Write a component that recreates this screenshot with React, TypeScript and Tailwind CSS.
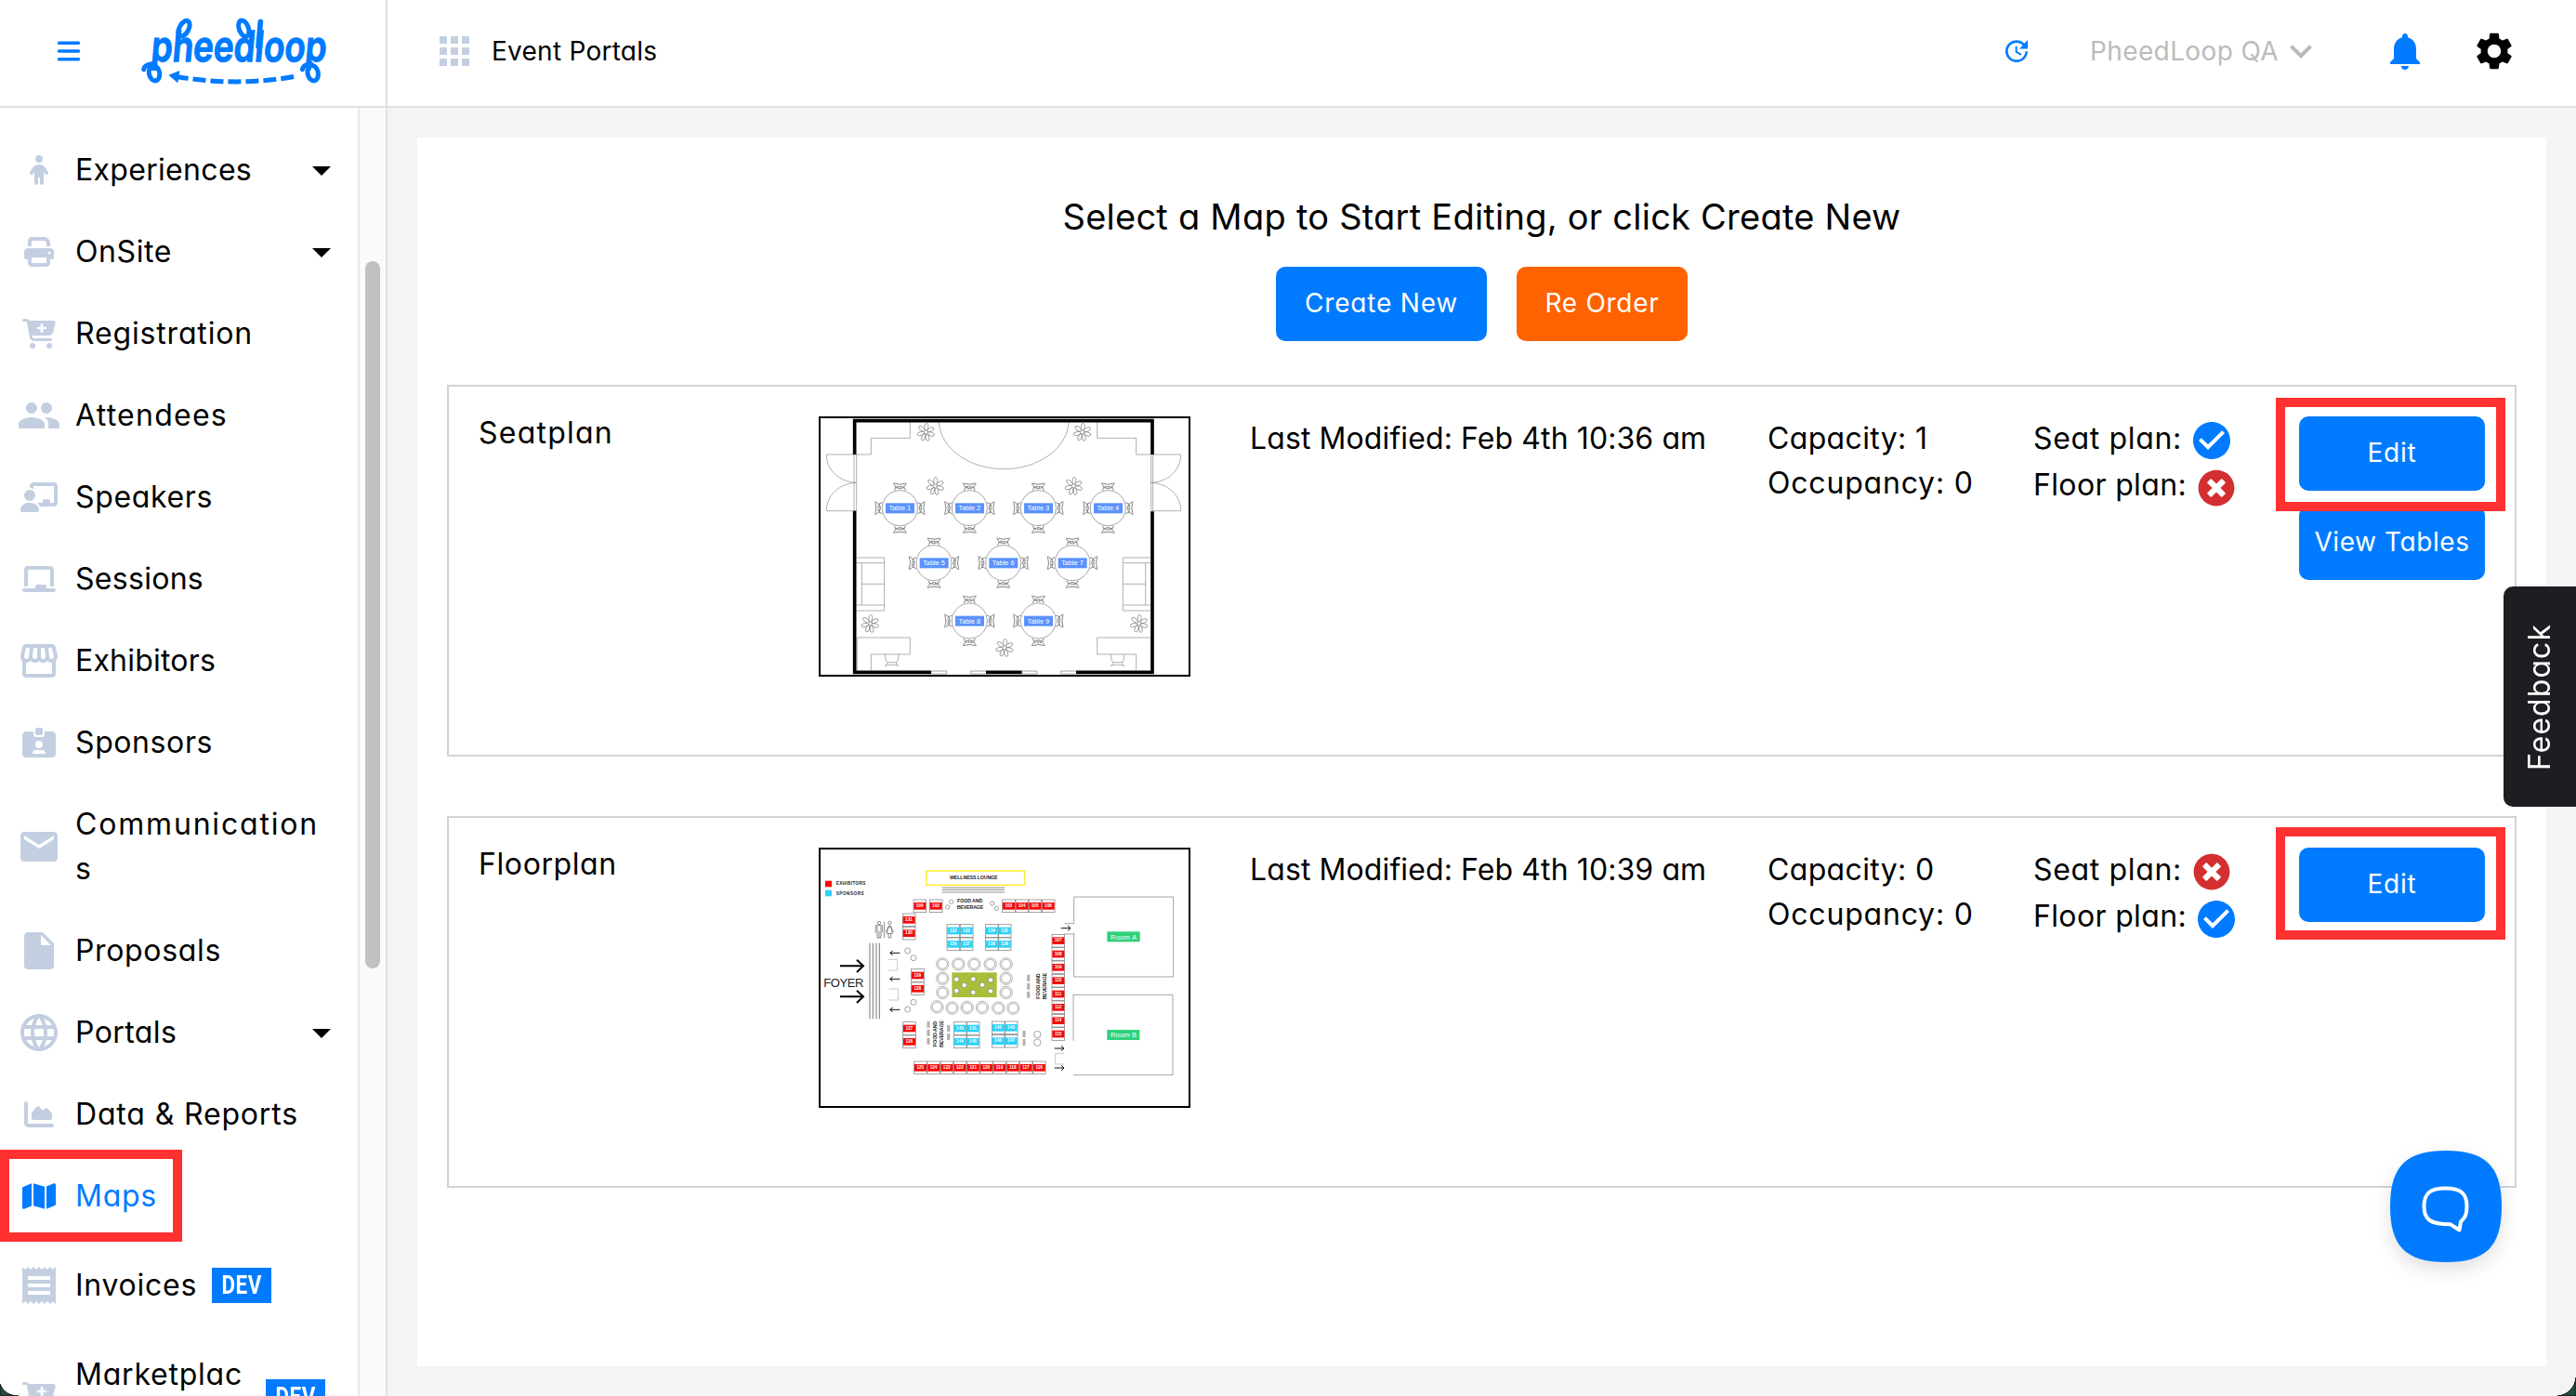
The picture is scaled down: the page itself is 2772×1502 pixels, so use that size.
import type { ReactNode } from "react";
import type { IconType } from "react-icons";
import {
    FaBars,
    FaCartPlus,
    FaChalkboard,
    FaChalkboardUser,
    FaChartArea,
    FaChild,
    FaIdCardClip,
    FaMap,
    FaPrint,
} from "react-icons/fa6";
import { FaTimesCircle } from "react-icons/fa";
import {
    MdApps,
    MdArrowDropDown,
    MdCheckCircle,
    MdEmail,
    MdInsertDriveFile,
    MdKeyboardArrowDown,
    MdLanguage,
    MdNotifications,
    MdOutlineStorefront,
    MdPeople,
    MdReceipt,
    MdSettings,
    MdUpdate,
} from "react-icons/md";

type NavItem = {
    label: string;
    icon: IconType;
    iconClass: string;
    labelClass: string;
    caret?: boolean;
    dev?: boolean;
    active?: boolean;
};

const navItems: NavItem[] = [
    { label: "Experiences", icon: FaChild, iconClass: "w-8 h-8", labelClass: "tracking-[0.31px]", caret: true },
    { label: "OnSite", icon: FaPrint, iconClass: "w-8 h-8", labelClass: "tracking-[0.6px]", caret: true },
    { label: "Registration", icon: FaCartPlus, iconClass: "w-9 h-8", labelClass: "tracking-[0.84px]" },
    { label: "Attendees", icon: MdPeople, iconClass: "w-12 h-12", labelClass: "tracking-[1.26px]" },
    { label: "Speakers", icon: FaChalkboardUser, iconClass: "w-10 h-8", labelClass: "tracking-[0.65px]" },
    { label: "Sessions", icon: FaChalkboard, iconClass: "w-9 h-8", labelClass: "tracking-[0.29px]" },
    { label: "Exhibitors", icon: MdOutlineStorefront, iconClass: "w-12 h-12", labelClass: "tracking-[0.2px]" },
    { label: "Sponsors", icon: FaIdCardClip, iconClass: "w-9 h-8", labelClass: "tracking-[0.6px]" },
    {
        label: "Communications",
        icon: MdEmail,
        iconClass: "w-12 h-12",
        labelClass: "w-[272px] break-all tracking-[1.82px]",
    },
    { label: "Proposals", icon: MdInsertDriveFile, iconClass: "w-12 h-12", labelClass: "tracking-[0.66px]" },
    { label: "Portals", icon: MdLanguage, iconClass: "w-12 h-12", labelClass: "tracking-[0.4px]", caret: true },
    { label: "Data & Reports", icon: FaChartArea, iconClass: "w-8 h-8", labelClass: "tracking-[0.84px]" },
    { label: "Maps", icon: FaMap, iconClass: "w-9 h-8", labelClass: "tracking-[0.75px]", active: true },
    { label: "Invoices", icon: MdReceipt, iconClass: "w-12 h-12", labelClass: "tracking-[0.73px]", dev: true },
    {
        label: "Marketplace",
        icon: FaCartPlus,
        iconClass: "w-9 h-8",
        labelClass: "w-[190px] break-all tracking-[0.78px]",
        dev: true,
    },
];

const Logo = () => (
    <svg
        viewBox="0 0 690 270"
        className="h-[90px] w-[230px] overflow-visible"
        fill="none"
        stroke="#007bff"
        strokeWidth="15"
    >
        <text
            x="66"
            y="168"
            transform="translate(14 0) skewX(-5)"
            textLength="566"
            lengthAdjust="spacingAndGlyphs"
            fill="#007bff"
            strokeWidth="4"
            fontSize="136"
            fontWeight="600"
            fontFamily="Inter, sans-serif"
        >
            pheedloop
        </text>
        {/* Loops on the ascenders and descenders */}
        <ellipse cx="174" cy="62" rx="15" ry="27" transform="rotate(28 174 62)" />
        <ellipse cx="367" cy="62" rx="15" ry="27" transform="rotate(-20 367 62)" />
        <path d="M421 40L414 120" strokeLinecap="round" strokeWidth="17" />
        <ellipse cx="78" cy="206" rx="17" ry="25" transform="rotate(-12 78 206)" />
        <ellipse cx="590" cy="206" rx="17" ry="25" transform="rotate(-12 590 206)" />
        <path d="M44 194Q46 178 72 176M556 194Q558 178 584 176" strokeLinecap="round" />
        {/* Return arrow */}
        <path d="M124 212L160 198L154 238Z" fill="#007bff" stroke="none" />
        <path d="M154 218Q345 250 532 217" strokeDasharray="42 15" strokeDashoffset="8" />
    </svg>
);

const DevBadge = () => (
    <span className="flex h-[38px] w-16 shrink-0 items-center justify-center bg-[#007bff] text-white">
        <span className="scale-x-[0.8] font-['Roboto',sans-serif] text-[28px] font-bold leading-none tracking-wide">
            DEV
        </span>
    </span>
);

const Sidebar = () => (
    <aside className="flex w-[417px] shrink-0 overflow-hidden border-r-2 border-[#e0e0e0] bg-white">
        <nav className="w-[385px] shrink-0 pt-[23px]">
            {navItems.map((item) => {
                const Icon = item.icon;
                return (
                    <div
                        key={item.label}
                        className={`relative flex min-h-[88px] items-center pl-5 pr-[29px] ${
                            item.label === "Invoices" ? "h-[104px]" : "py-5"
                        } ${item.active ? "text-[#007bff]" : "text-black"}`}
                    >
                        <span
                            className={`flex w-11 shrink-0 items-center justify-center ${
                                item.active ? "text-[#007bff]" : "text-[#c3cfe1]"
                            }`}
                        >
                            <Icon className={`shrink-0 ${item.iconClass}`} />
                        </span>
                        <span className={`ml-[17px] text-[32px] leading-[48px] ${item.labelClass}`}>{item.label}</span>
                        {item.dev && (
                            <span className={item.label === "Invoices" ? "ml-4" : "ml-[15px]"}>
                                <DevBadge />
                            </span>
                        )}
                        {item.caret && <MdArrowDropDown className="ml-auto -mr-3.5 h-12 w-12" />}
                        {item.active && (
                            <span className="absolute -top-[6px] left-0 h-[99px] w-[196px] border-10 border-[#ff3131]" />
                        )}
                    </div>
                );
            })}
        </nav>
        {/* Scrollbar */}
        <div className="flex-1 border-l-2 border-[#e8e8e8] bg-[#fafafa] pl-1.5 pt-[165px]">
            <div className="h-[761px] w-4 rounded-full bg-[#c1c1c1]" />
        </div>
    </aside>
);

const Header = () => (
    <header className="flex h-[116px] shrink-0 border-b-2 border-[#e0e0e0] bg-white">
        <div className="flex w-[417px] shrink-0 items-center border-r-2 border-[#e0e0e0] pb-1 pl-[60px]">
            <FaBars className="h-7 w-7 text-[#007bff]" />
            <div className="ml-[52px]">
                <Logo />
            </div>
        </div>
        <div className="flex flex-1 items-center pb-1 pl-12 pr-16">
            <MdApps className="h-12 w-12 text-[#c3cfe1]" />
            <span className="ml-4 text-[28px] tracking-[0.25px]">Event Portals</span>
            <MdUpdate className="ml-auto h-8 w-8 text-[#007bff]" />
            <span className="ml-[63px] text-[28px] tracking-[0.38px] text-[#bbbbbb]">PheedLoop QA</span>
            <MdKeyboardArrowDown className="h-12 w-12 text-[#bbbbbb]" />
            <MdNotifications className="ml-16 h-12 w-12 text-[#007bff]" />
            <MdSettings className="ml-12 h-12 w-12" />
        </div>
    </header>
);

/* ---------- Seat plan drawing ---------- */

const seatTables = [
    { x: 295, y: 322 },
    { x: 520, y: 322 },
    { x: 742, y: 322 },
    { x: 967, y: 322 },
    { x: 405, y: 499 },
    { x: 629, y: 499 },
    { x: 852, y: 499 },
    { x: 520, y: 686 },
    { x: 742, y: 686 },
];

const plants = [
    { x: 379, y: 77 },
    { x: 884, y: 77 },
    { x: 409, y: 251 },
    { x: 856, y: 251 },
    { x: 199, y: 695 },
    { x: 1067, y: 695 },
    { x: 633, y: 773 },
];

const chair = "M-22-80Q0-73 22-80M-20-77L-13-68L-18-57M20-77L13-68L18-57M-14-67Q0-58 14-67M-11-70h6v5M-2-70h5v5M11-70h-4";

const SeatPlanDrawing = () => (
    <svg viewBox="39 32 1188 828" className="h-full w-full" fill="none" stroke="#777" strokeWidth="2">
        <g stroke="#888">
            <path d="M328 44V96H202V149H155M932 44V96H1058V149H1104" />
            <path d="M421 44C425 130 520 196 631 196S836 130 840 44" />
            <path d="M155 149H58C58 200 100 238 155 240C100 242 58 280 58 331H155" />
            <path d="M1106 149H1202C1202 200 1160 238 1106 240C1160 242 1202 280 1202 331H1106" />
            <path d="M147 149V331M155 149V331M1106 149V331M1112 149V331" />
            <path d="M155 482H245V653H155M155 499H245M155 635H245M172 499V635M172 567H245" />
            <path d="M1104 482H1015V653H1104M1104 499H1015M1104 635H1015M1088 499V635M1088 567H1015" />
            <path d="M157 740H328V794H202V846M157 740V846M1104 740H932V794H1058V846" />
            <path d="M247 794Q248 818 256 820H282Q290 818 291 794M246 832Q269 822 292 832M256 820L250 830M282 820L288 830" />
            <path d="M976 794Q977 818 985 820H1011Q1019 818 1020 794M975 832Q998 822 1021 832M985 820L979 830M1011 820L1017 830" />
        </g>
        <path d="M149 149V40H1110V149" stroke="#000" strokeWidth="11" />
        <path d="M149 331V852H396M573 852H689M864 852H1110V333" stroke="#000" strokeWidth="11" />
        <path d="M396 848H446V857H396M573 848H524V857H573M689 848H738V857H689M864 848H815V857H864" />
        {plants.map((p) => (
            <g key={`${p.x}-${p.y}`} transform={`translate(${p.x} ${p.y})`} stroke="#777">
                {[5, 62, 110, 165, 205, 255, 310].map((a) => (
                    <ellipse key={a} cx="0" cy="-17" rx="6" ry="12" transform={`rotate(${a})`} />
                ))}
            </g>
        ))}
        {seatTables.map((t, i) => (
            <g key={i} transform={`translate(${t.x} ${t.y})`}>
                <circle r="57" />
                {[0, 90, 180, 270].map((a) => (
                    <path key={a} d={chair} stroke="#444" transform={`rotate(${a})`} />
                ))}
                <rect x="-46" y="-16" width="93" height="33" fill="#5b92fb" stroke="none" />
                <text
                    y="8"
                    textAnchor="middle"
                    fontSize="22"
                    fill="#fff"
                    stroke="none"
                    fontFamily="Liberation Sans, sans-serif"
                >
                    Table {i + 1}
                </text>
            </g>
        ))}
    </svg>
);

/* ---------- Floor plan drawing ---------- */

const RED = "#f50a0a";
const CYAN = "#2ad2f8";

const booths: [number, number, string, string][] = [
    [338, 205, "100", RED],
    [390, 205, "102", RED],
    [625, 205, "103", RED],
    [668, 205, "104", RED],
    [710, 205, "105", RED],
    [753, 205, "106", RED],
    [303, 250, "131", RED],
    [303, 293, "130", RED],
    [331, 429, "129", RED],
    [331, 472, "128", RED],
    [304, 600, "127", RED],
    [304, 643, "126", RED],
    ...["107", "108", "109", "110", "111", "112", "114", "115"].map(
        (n, i): [number, number, string, string] => [785, 317 + i * 43, n, RED],
    ),
    ...["125", "124", "123", "122", "121", "120", "119", "118", "117", "116"].map(
        (n, i): [number, number, string, string] => [340 + i * 42.6, 727, n, RED],
    ),
    [446, 285, "132", CYAN],
    [489, 285, "133", CYAN],
    [446, 328, "136", CYAN],
    [489, 328, "137", CYAN],
    [570, 285, "134", CYAN],
    [612, 285, "135", CYAN],
    [570, 328, "138", CYAN],
    [612, 328, "139", CYAN],
    [468, 600, "140", CYAN],
    [510, 600, "141", CYAN],
    [468, 643, "144", CYAN],
    [510, 643, "145", CYAN],
    [591, 598, "142", CYAN],
    [633, 598, "143", CYAN],
    [591, 641, "146", CYAN],
    [633, 641, "147", CYAN],
];

const stools = [
    [433, 413], [484, 413], [535, 413], [587, 413], [638, 413],
    [433, 459], [638, 459], [433, 505], [638, 505],
    [415, 551], [464, 555], [512, 553], [561, 553], [613, 555], [661, 555],
];

const greenDots = [
    [478, 462], [532, 461], [588, 464], [503, 481], [561, 480], [478, 499], [532, 504], [588, 500],
];

const FloorPlanDrawing = () => (
    <svg
        viewBox="39 43 1188 828"
        className="h-full w-full"
        fill="none"
        stroke="#555"
        strokeWidth="2"
        fontFamily="Liberation Sans, sans-serif"
    >
        {/* Legend */}
        <g stroke="none">
            <rect x="54" y="144" width="21" height="20" fill={RED} />
            <rect x="54" y="174" width="21" height="20" fill={CYAN} />
            <g fill="#222" fontSize="14" fontWeight="700">
                <text x="89" y="158" textLength="95">EXHIBITORS</text>
                <text x="89" y="189" textLength="90">SPONSORS</text>
            </g>
        </g>
        <rect x="381" y="112" width="317" height="46" stroke="#f8ef3c" strokeWidth="5" />
        <g fill="#222" stroke="none" fontWeight="700" fontSize="16">
            <text x="456" y="139" textLength="155">WELLNESS LOUNGE</text>
            <text x="480" y="215" textLength="82">FOOD AND</text>
            <text x="479" y="235" textLength="86">BEVERAGE</text>
            <text transform="translate(748 525) rotate(-90)" textLength="82">FOOD AND</text>
            <text transform="translate(769 527) rotate(-90)" textLength="86">BEVERAGE</text>
            <text transform="translate(414 679) rotate(-90)" textLength="82">FOOD AND</text>
            <text transform="translate(435 681) rotate(-90)" textLength="86">BEVERAGE</text>
        </g>
        <path d="M431 166H633M431 173H633M431 181H633" />
        {/* Foyer */}
        <text x="49" y="486" fontSize="39" textLength="129" fill="#222" stroke="none">
            FOYER
        </text>
        <g stroke="#000" strokeWidth="6">
            <path d="M102 419H176M156 399L177 419L156 439M102 518H176M156 498L177 518L156 538" />
        </g>
        <path d="M198 345V590M208 345V590M219 345V590M229 345V590" stroke="#777" strokeWidth="3" />
        <g stroke="#111" strokeWidth="3">
            {[377, 461, 560].map((y) => (
                <path key={y} d={`M295 ${y}H264M272 ${y - 7}L263 ${y}L272 ${y + 7}`} />
            ))}
            <path d="M815 297H845M837 289L846 297L837 305" />
            <path d="M794 685H824M816 677L825 685L816 693M794 748H824M816 740L825 748L816 756" />
        </g>
        <path d="M258 398H287V433H258M260 493H289V529H260M826 701H797V736H826" stroke="#aaa" />
        {/* Restrooms */}
        <g stroke="#555">
            <circle cx="228" cy="280" r="5" />
            <circle cx="262" cy="280" r="5" />
            <path d="M217 312V288H239V312M222 290V328H234V290M228 306V328M245 276V328" />
            <path d="M262 288L250 310M262 288L275 310M257 292L253 314H271L267 292ZM258 314V328H266V314" />
        </g>
        {/* Rooms */}
        <path d="M826 282H857V196H1178V454H857V313M857 316H826M855 660V512H1176V771H855" stroke="#777" />
        <rect x="964" y="308" width="106" height="33" fill="#2fd07a" stroke="none" />
        <rect x="964" y="625" width="105" height="33" fill="#2fd07a" stroke="none" />
        <g fill="#fff" stroke="none" fontSize="23" textAnchor="middle">
            <text x="1017" y="333" textLength="84">Room A</text>
            <text x="1017" y="649" textLength="84">Room B</text>
        </g>
        {/* Booths */}
        {booths.map(([x, y, label, color]) => (
            <g key={label}>
                <rect x={x + 1} y={y} width="41" height="41" stroke="#777" />
                <rect x={x + 2} y={y + 9} width="39" height="23" fill={color} stroke="none" />
                <text
                    x={x + 21}
                    y={y + 24}
                    textAnchor="middle"
                    fontSize="14"
                    fontWeight="700"
                    fill="#fff"
                    stroke="none"
                >
                    {label}
                </text>
            </g>
        ))}
        {stools.map(([x, y]) => (
            <g key={`${x}-${y}`} stroke="#888">
                <circle cx={x} cy={y} r="20" />
                <circle cx={x} cy={y} r="15" />
            </g>
        ))}
        <rect x="463" y="440" width="145" height="80" fill="#a9bf3a" stroke="none" />
        {greenDots.map(([x, y]) => (
            <circle key={`${x}-${y}`} cx={x} cy={y} r="8" fill="#fff" stroke="#777" />
        ))}
        <g stroke="#777">
            {[[461, 212], [449, 229], [593, 217], [607, 233]].map(([x, y]) => (
                <circle key={x} cx={x} cy={y} r="6.5" />
            ))}
            {[[320, 370], [339, 393], [339, 536], [320, 559]].map(([x, y]) => (
                <circle key={y} cx={x} cy={y} r="9" />
            ))}
            <circle cx="739" cy="640" r="11" />
            <circle cx="739" cy="666" r="11" />
        </g>
        <g stroke="#b5adad" strokeWidth="9">
            <path d="M710 447V522" strokeDasharray="21 6" />
            <path d="M387 597V673" strokeDasharray="21 6" />
            <path d="M452 610V659" strokeDasharray="21 6" />
            <path d="M696 628V677" strokeDasharray="21 6" />
        </g>
    </svg>
);

/* ---------- Map cards ---------- */

type MapCardProps = {
    name: string;
    nameClass: string;
    drawing: ReactNode;
    modified: string;
    capacity: number;
    occupancy: number;
    seatPlan: boolean;
    floorPlan: boolean;
    viewTables?: boolean;
};

const Status = ({ on }: { on: boolean }) =>
    on ? (
        <span className="flex h-10 w-10 items-center justify-center">
            <MdCheckCircle className="h-12 w-12 shrink-0 text-[#007bff]" />
        </span>
    ) : (
        <FaTimesCircle className="h-10 w-10 text-[#d32f2f]" />
    );

const MapCard = (props: MapCardProps) => (
    <div className="flex h-[400px] items-start border-2 border-[#d3d3d3] p-8 text-[32px] leading-[48px]">
        <div className={`w-[366px] leading-[36px] ${props.nameClass}`}>{props.name}</div>
        <div className="h-[280px] w-[400px] border-2 border-black">{props.drawing}</div>
        <div className="ml-16 w-[557px] tracking-[0.1px]">Last Modified: {props.modified}</div>
        <div className="w-[286px]">
            <div className="tracking-[0.35px]">Capacity: {props.capacity}</div>
            <div className="tracking-[0.8px]">Occupancy: {props.occupancy}</div>
        </div>
        <div>
            <div className="flex h-[51px] items-center gap-3">
                <span className="pb-1 tracking-[0.67px]">Seat plan:</span>
                <Status on={props.seatPlan} />
            </div>
            <div className="flex h-[51px] items-center gap-3">
                <span className="pb-1.5 tracking-[0.35px]">Floor plan:</span>
                <Status on={props.floorPlan} />
            </div>
        </div>
        <div className="ml-auto flex w-[200px] flex-col gap-4 text-[28px] text-white">
            <div className="relative z-10">
                <button type="button" className="h-20 w-full rounded-[10px] bg-[#007bff] pb-0.5 tracking-[0.77px]">
                    Edit
                </button>
                <span
                    className={`absolute -left-[25px] w-[247px] border-10 border-[#ff3131] ${
                        props.viewTables ? "-top-5 h-[122px]" : "-top-[22px] h-[121px]"
                    }`}
                />
            </div>
            {props.viewTables && (
                <button type="button" className="h-20 w-full rounded-[10px] bg-[#007bff] pb-0.5 tracking-[0.57px]">
                    View Tables
                </button>
            )}
        </div>
    </div>
);

export default function App() {
    return (
        <div className="relative flex h-[1502px] w-[2772px] flex-col overflow-hidden bg-[#f4f4f4] font-['Inter',sans-serif] text-black [font-feature-settings:'cv11']">
            <Header />
            <div className="flex min-h-0 flex-1">
                <Sidebar />
                <main className="flex-1 p-8">
                    <div className="flex h-[1322px] flex-col bg-white px-8 pt-16">
                        <h1 className="text-center text-[38px] leading-[42px] tracking-[0.24px]">
                            Select a Map to Start Editing, or click Create New
                        </h1>
                        <div className="mt-[33px] flex justify-center gap-8 text-[28px] text-white">
                            <button
                                type="button"
                                className="h-20 w-[227px] rounded-[10px] bg-[#007bff] pb-0.5 tracking-[0.81px]"
                            >
                                Create New
                            </button>
                            <button
                                type="button"
                                className="h-20 w-[184px] rounded-[10px] bg-[#ff6200] pb-0.5 tracking-[0.71px]"
                            >
                                Re Order
                            </button>
                        </div>
                        <div className="mt-[47px] flex flex-col gap-16">
                            <MapCard
                                name="Seatplan"
                                nameClass="tracking-[1.24px]"
                                drawing={<SeatPlanDrawing />}
                                modified="Feb 4th 10:36 am"
                                capacity={1}
                                occupancy={0}
                                seatPlan
                                floorPlan={false}
                                viewTables
                            />
                            <MapCard
                                name="Floorplan"
                                nameClass="tracking-[0.6px]"
                                drawing={<FloorPlanDrawing />}
                                modified="Feb 4th 10:39 am"
                                capacity={0}
                                occupancy={0}
                                seatPlan={false}
                                floorPlan
                            />
                        </div>
                    </div>
                </main>
            </div>

            {/* Feedback tab */}
            <div className="absolute right-0 top-[631px] flex h-[237px] w-[78px] items-center justify-center rounded-l-[10px] bg-[#1d1e22] text-white">
                <span className="rotate-180 text-[32px] leading-none tracking-[1.05px] [writing-mode:vertical-rl]">
                    Feedback
                </span>
            </div>

            {/* Chat launcher */}
            <svg
                viewBox="0 0 120 120"
                className="absolute left-[2572px] top-[1238px] h-[120px] w-[120px] overflow-visible drop-shadow-[0_8px_10px_rgba(0,0,0,0.12)]"
            >
                <path d="M60 0C103 0 120 17 120 60S103 120 60 120 0 103 0 60 17 0 60 0Z" fill="#007bff" />
                <path
                    d="M59.5 40.5C76 40.5 82.5 46 82.5 60C82.5 68 81 72 76 76.5L74.5 85.5L65 79.3C44 79.3 36.5 75 36.5 60C36.5 46 43 40.5 59.5 40.5Z"
                    fill="none"
                    stroke="#fff"
                    strokeWidth="4"
                    strokeLinejoin="round"
                />
            </svg>

            {/* Rounded window corners */}
            <svg viewBox="0 0 24 24" className="absolute bottom-0 left-0 h-6 w-6">
                <path d="M0 11C3 19 10 24 20 24H0Z" fill="#1f4d40" stroke="#111" />
            </svg>
            <svg viewBox="0 0 24 24" className="absolute bottom-0 right-0 h-6 w-6">
                <path d="M24 4C23 15 15 23 4 24H24Z" fill="#1f4d40" stroke="#111" />
            </svg>
        </div>
    );
}
